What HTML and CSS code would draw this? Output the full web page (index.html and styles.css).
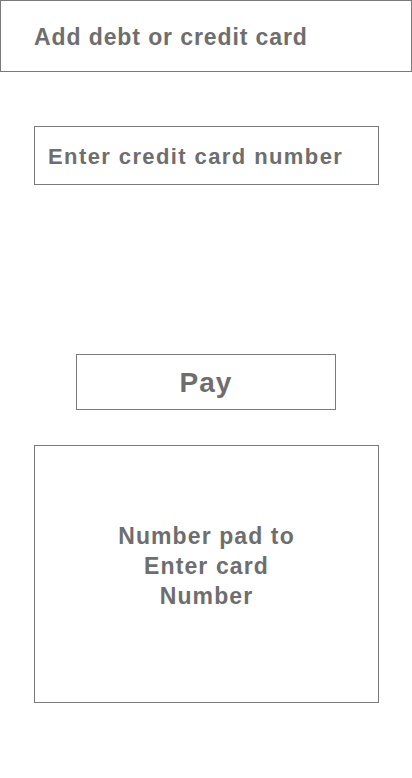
FILE: index.html
```html
<!DOCTYPE html>
<html>
<head>
<meta charset="utf-8">
<link rel="stylesheet" href="styles.css">
</head>
<body>
<div class="page">
  <header class="title-bar"><h1 class="title">Add debt or credit card</h1></header>
  <div class="card-input">Enter credit card number</div>
  <div class="pay-row"><button class="pay">Pay</button></div>
  <div class="numpad">Number pad to<br>Enter card<br>Number</div>
</div>
</body>
</html>
```
FILE: styles.css
```css
html, body { margin: 0; padding: 0; background: #fff; }
body { font-family: "Liberation Sans", Arial, sans-serif; font-weight: bold; color: #6e6e6e; }
.page { width: 412px; display: flex; flex-direction: column; }
.title-bar { box-sizing: border-box; height: 72px; border: 1px solid #7a7a7a; display: flex; align-items: center; padding: 3px 0 0 33px; }
.title { margin: 0; font-size: 23px; letter-spacing: 0.9px; font-weight: bold; }
.card-input { box-sizing: border-box; margin: 54px 0 0 34px; width: 345px; height: 59px; border: 1px solid #7a7a7a; display: flex; align-items: center; padding: 2px 0 0 13px; font-size: 22px; letter-spacing: 1.4px; }
.pay-row { display: flex; padding-left: 76px; margin-top: 169px; }
.pay { box-sizing: border-box; width: 260px; height: 56px; border: 1px solid #7a7a7a; background: #fff; color: #6e6e6e; font-family: inherit; font-weight: bold; font-size: 28px; letter-spacing: 1px; padding: 2px 0 0; }
.numpad { box-sizing: border-box; margin: 35px 0 0 34px; width: 345px; height: 258px; border: 1px solid #7a7a7a; display: flex; align-items: center; justify-content: center; text-align: center; font-size: 23px; line-height: 30px; letter-spacing: 1.1px; padding-bottom: 17px; }
```
